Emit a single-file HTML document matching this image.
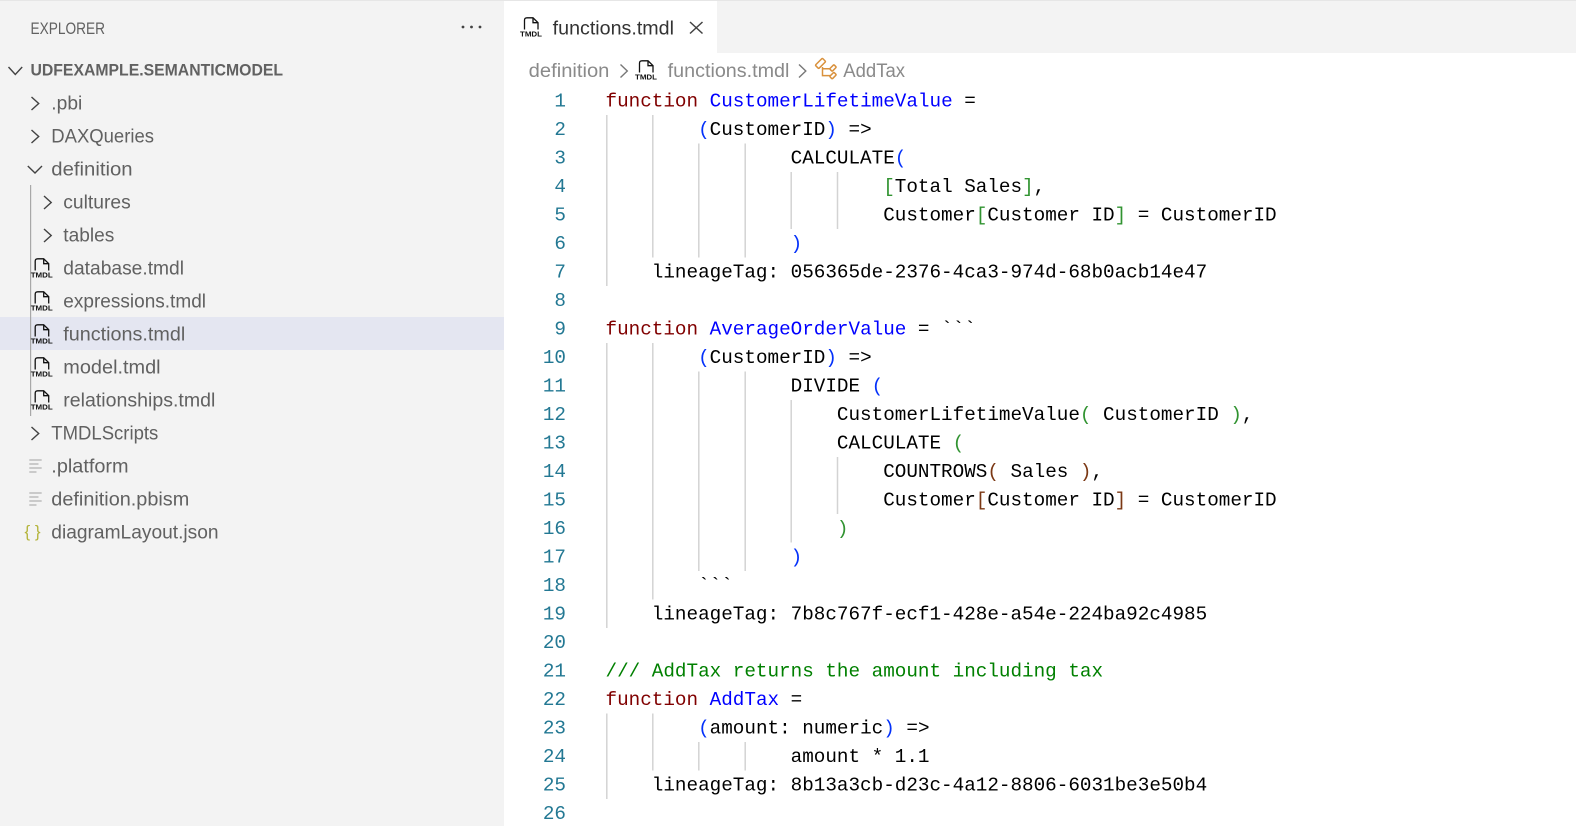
<!DOCTYPE html>
<html><head><meta charset="utf-8"><title>functions.tmdl</title>
<style>
html,body{margin:0;padding:0;width:1576px;height:826px;overflow:hidden;background:#fff}
svg{display:block}
.s{font-family:"Liberation Sans",sans-serif;font-size:19px;fill:#616161}
.b{font-family:"Liberation Sans",sans-serif;font-size:19px;fill:#8a8a8a}
.c{font-family:"Liberation Mono",monospace;font-size:19.29px;fill:#000;white-space:pre}
.n{font-family:"Liberation Mono",monospace;font-size:19.29px;fill:#237893;text-anchor:end}
.t{font-family:"Liberation Sans",sans-serif;font-size:7.6px;font-weight:bold;fill:#111}
.k{fill:#800000}.f{fill:#0000ff}.p1{fill:#0431fa}.p2{fill:#319331}.p3{fill:#7b3814}.g{fill:#008000}
.ch{fill:none;stroke:#424242;stroke-width:1.4}
.pg{fill:none;stroke:#111;stroke-width:1.3}
.gd{stroke:#d3d3d3;stroke-width:1.5}
.ln{stroke:#bdbdbd;stroke-width:1.4}
</style></head><body>
<svg width="1576" height="826" viewBox="0 0 1576 826" xmlns="http://www.w3.org/2000/svg">
<rect width="1576" height="826" fill="#fff"/>
<rect width="504" height="826" fill="#f3f3f3"/>
<rect x="504" width="1072" height="53" fill="#f3f3f3"/>
<rect width="1576" height="1" fill="#e6e6e6"/>
<rect x="504" y="1" width="213" height="52" fill="#fff"/>
<rect y="317" width="504" height="33" fill="#e4e6f1"/>

<!-- sidebar header -->
<text x="30.5" y="34" class="s" style="font-size:17px" textLength="74.5" lengthAdjust="spacingAndGlyphs">EXPLORER</text>
<circle cx="463" cy="27" r="1.4" fill="#424242"/><circle cx="471.5" cy="27" r="1.4" fill="#424242"/><circle cx="480" cy="27" r="1.4" fill="#424242"/>

<!-- tree guide -->
<rect x="30" y="185" width="1.2" height="231" fill="#a8a8a8"/>

<!-- chevrons -->
<path class="ch" d="M8.5 67 L15.3 74.5 L22.2 67"/>
<path class="ch" d="M31.5 97 L38.7 103.5 L31.5 110"/>
<path class="ch" d="M31.5 130 L38.7 136.5 L31.5 143"/>
<path class="ch" d="M27.8 166 L35 173 L42 166"/>
<path class="ch" d="M44 196 L51.2 202.5 L44 209"/>
<path class="ch" d="M44 229 L51.2 235.5 L44 242"/>
<path class="ch" d="M31.5 427 L38.7 433.5 L31.5 440"/>

<!-- tree labels -->
<text x="30.5" y="75.7" class="s" style="font-size:17px;font-weight:bold" textLength="252.5" lengthAdjust="spacingAndGlyphs">UDFEXAMPLE.SEMANTICMODEL</text>
<text x="51.3" y="109.5" class="s" textLength="31" lengthAdjust="spacingAndGlyphs">.pbi</text>
<text x="51.3" y="142.5" class="s" textLength="102.7" lengthAdjust="spacingAndGlyphs">DAXQueries</text>
<text x="51.3" y="175.5" class="s" textLength="81.3" lengthAdjust="spacingAndGlyphs">definition</text>
<text x="63.3" y="208.5" class="s" textLength="67.4" lengthAdjust="spacingAndGlyphs">cultures</text>
<text x="63.3" y="241.5" class="s" textLength="51" lengthAdjust="spacingAndGlyphs">tables</text>
<text x="63.3" y="274.5" class="s" textLength="120.7" lengthAdjust="spacingAndGlyphs">database.tmdl</text>
<text x="63.3" y="307.5" class="s" textLength="142.7" lengthAdjust="spacingAndGlyphs">expressions.tmdl</text>
<text x="63.3" y="340.5" class="s" textLength="122" lengthAdjust="spacingAndGlyphs">functions.tmdl</text>
<text x="63.3" y="373.5" class="s" textLength="97.3" lengthAdjust="spacingAndGlyphs">model.tmdl</text>
<text x="63.3" y="406.5" class="s" textLength="152" lengthAdjust="spacingAndGlyphs">relationships.tmdl</text>
<text x="51.3" y="439.5" class="s" textLength="107" lengthAdjust="spacingAndGlyphs">TMDLScripts</text>
<text x="51.3" y="472.5" class="s" textLength="77.3" lengthAdjust="spacingAndGlyphs">.platform</text>
<text x="51.3" y="505.5" class="s" textLength="138" lengthAdjust="spacingAndGlyphs">definition.pbism</text>
<text x="51.3" y="538.5" class="s" textLength="167.3" lengthAdjust="spacingAndGlyphs">diagramLayout.json</text>

<!-- TMDL icons in tree -->
<g transform="translate(30.7,258)"><path class="pg" d="M4.5 12.5V3.2Q4.5 .8 7 .8H13L18 5.7V12.5M13 1V5.7H18"/><text x="0" y="19.5" class="t" textLength="22" lengthAdjust="spacingAndGlyphs">TMDL</text></g>
<g transform="translate(30.7,291)"><path class="pg" d="M4.5 12.5V3.2Q4.5 .8 7 .8H13L18 5.7V12.5M13 1V5.7H18"/><text x="0" y="19.5" class="t" textLength="22" lengthAdjust="spacingAndGlyphs">TMDL</text></g>
<g transform="translate(30.7,324)"><path class="pg" d="M4.5 12.5V3.2Q4.5 .8 7 .8H13L18 5.7V12.5M13 1V5.7H18"/><text x="0" y="19.5" class="t" textLength="22" lengthAdjust="spacingAndGlyphs">TMDL</text></g>
<g transform="translate(30.7,357)"><path class="pg" d="M4.5 12.5V3.2Q4.5 .8 7 .8H13L18 5.7V12.5M13 1V5.7H18"/><text x="0" y="19.5" class="t" textLength="22" lengthAdjust="spacingAndGlyphs">TMDL</text></g>
<g transform="translate(30.7,390)"><path class="pg" d="M4.5 12.5V3.2Q4.5 .8 7 .8H13L18 5.7V12.5M13 1V5.7H18"/><text x="0" y="19.5" class="t" textLength="22" lengthAdjust="spacingAndGlyphs">TMDL</text></g>

<!-- plain file icons -->
<path class="ln" d="M29.3 460H41.7M29.3 464H38.5M29.3 468H41.7M29.3 472H36.5"/>
<path class="ln" d="M29.3 493H41.7M29.3 497H38.5M29.3 501H41.7M29.3 505H36.5"/>
<text x="24.5" y="537" style="font-family:'Liberation Sans',sans-serif;font-size:17px;fill:#b4b43c;white-space:pre" textLength="16" lengthAdjust="spacing">{ }</text>

<!-- tab -->
<g transform="translate(520,17)"><path class="pg" d="M4.5 12.5V3.2Q4.5 .8 7 .8H13L18 5.7V12.5M13 1V5.7H18"/><text x="0" y="19.5" class="t" textLength="22" lengthAdjust="spacingAndGlyphs">TMDL</text></g>
<text x="552.7" y="34.7" class="s" style="fill:#333" textLength="121.3" lengthAdjust="spacingAndGlyphs">functions.tmdl</text>
<path d="M690 22L702.5 33.5M702.5 22L690 33.5" fill="none" stroke="#424242" stroke-width="1.5"/>

<!-- breadcrumb -->
<text x="528.7" y="76.8" class="b" textLength="80.7" lengthAdjust="spacingAndGlyphs">definition</text>
<path d="M620.5 64.5L627.3 71L620.5 77.5" fill="none" stroke="#777" stroke-width="1.4"/>
<g transform="translate(635,60)"><path class="pg" d="M4.5 12.5V3.2Q4.5 .8 7 .8H13L18 5.7V12.5M13 1V5.7H18"/><text x="0" y="19.5" class="t" textLength="22" lengthAdjust="spacingAndGlyphs">TMDL</text></g>
<text x="667.7" y="76.8" class="b" textLength="121.7" lengthAdjust="spacingAndGlyphs">functions.tmdl</text>
<path d="M799 64.5L805.8 71L799 77.5" fill="none" stroke="#777" stroke-width="1.4"/>
<g fill="none" stroke="#d9913c" stroke-width="1.5">
<rect x="815.5" y="61" width="10" height="4.8" rx="1" transform="rotate(-45 820.5 63.4)"/>
<rect x="830" y="66.2" width="6" height="3.6" rx="1" transform="rotate(-45 833 68)"/>
<rect x="830" y="73.8" width="6" height="3.6" rx="1" transform="rotate(-45 833 75.6)"/>
<path d="M822.5 67V75.6H830.5M822.5 68.7H830.5"/>
</g>
<text x="843.3" y="76.8" class="b" textLength="61.7" lengthAdjust="spacingAndGlyphs">AddTax</text>

<!-- indent guides -->
<path class="gd" d="M606.8 115V286M652.8 115V257.5M698.8 143.5V257.5M745.2 143.5V257.5M791.2 172V229M837.5 172V229"/>
<path class="gd" d="M606.8 343V628M652.8 343V599.5M698.8 371.5V571M745.2 371.5V571M791.2 400V542.5M837.5 457V514"/>
<path class="gd" d="M606.8 713.5V799M652.8 713.5V770.5M698.8 742V770.5M745.2 742V770.5"/>

<!-- line numbers -->
<text x="566" y="106.3" class="n">1</text>
<text x="566" y="134.8" class="n">2</text>
<text x="566" y="163.3" class="n">3</text>
<text x="566" y="191.8" class="n">4</text>
<text x="566" y="220.3" class="n">5</text>
<text x="566" y="248.8" class="n">6</text>
<text x="566" y="277.3" class="n">7</text>
<text x="566" y="305.8" class="n">8</text>
<text x="566" y="334.3" class="n">9</text>
<text x="566" y="362.8" class="n">10</text>
<text x="566" y="391.3" class="n">11</text>
<text x="566" y="419.8" class="n">12</text>
<text x="566" y="448.3" class="n">13</text>
<text x="566" y="476.8" class="n">14</text>
<text x="566" y="505.3" class="n">15</text>
<text x="566" y="533.8" class="n">16</text>
<text x="566" y="562.3" class="n">17</text>
<text x="566" y="590.8" class="n">18</text>
<text x="566" y="619.3" class="n">19</text>
<text x="566" y="647.8" class="n">20</text>
<text x="566" y="676.3" class="n">21</text>
<text x="566" y="704.8" class="n">22</text>
<text x="566" y="733.3" class="n">23</text>
<text x="566" y="761.8" class="n">24</text>
<text x="566" y="790.3" class="n">25</text>
<text x="566" y="818.8" class="n">26</text>

<!-- code -->
<text x="605.5" y="106.3" class="c"><tspan class="k">function</tspan> <tspan class="f">CustomerLifetimeValue</tspan> =</text>
<text x="605.5" y="134.8" class="c">        <tspan class="p1">(</tspan>CustomerID<tspan class="p1">)</tspan> =&gt;</text>
<text x="605.5" y="163.3" class="c">                CALCULATE<tspan class="p1">(</tspan></text>
<text x="605.5" y="191.8" class="c">                        <tspan class="p2">[</tspan>Total Sales<tspan class="p2">]</tspan>,</text>
<text x="605.5" y="220.3" class="c">                        Customer<tspan class="p2">[</tspan>Customer ID<tspan class="p2">]</tspan> = CustomerID</text>
<text x="605.5" y="248.8" class="c">                <tspan class="p1">)</tspan></text>
<text x="605.5" y="277.3" class="c">    lineageTag: 056365de-2376-4ca3-974d-68b0acb14e47</text>
<text x="605.5" y="334.3" class="c"><tspan class="k">function</tspan> <tspan class="f">AverageOrderValue</tspan> = &#96;&#96;&#96;</text>
<text x="605.5" y="362.8" class="c">        <tspan class="p1">(</tspan>CustomerID<tspan class="p1">)</tspan> =&gt;</text>
<text x="605.5" y="391.3" class="c">                DIVIDE <tspan class="p1">(</tspan></text>
<text x="605.5" y="419.8" class="c">                    CustomerLifetimeValue<tspan class="p2">(</tspan> CustomerID <tspan class="p2">)</tspan>,</text>
<text x="605.5" y="448.3" class="c">                    CALCULATE <tspan class="p2">(</tspan></text>
<text x="605.5" y="476.8" class="c">                        COUNTROWS<tspan class="p3">(</tspan> Sales <tspan class="p3">)</tspan>,</text>
<text x="605.5" y="505.3" class="c">                        Customer<tspan class="p3">[</tspan>Customer ID<tspan class="p3">]</tspan> = CustomerID</text>
<text x="605.5" y="533.8" class="c">                    <tspan class="p2">)</tspan></text>
<text x="605.5" y="562.3" class="c">                <tspan class="p1">)</tspan></text>
<text x="605.5" y="590.8" class="c">        &#96;&#96;&#96;</text>
<text x="605.5" y="619.3" class="c">    lineageTag: 7b8c767f-ecf1-428e-a54e-224ba92c4985</text>
<text x="605.5" y="676.3" class="c g">/// AddTax returns the amount including tax</text>
<text x="605.5" y="704.8" class="c"><tspan class="k">function</tspan> <tspan class="f">AddTax</tspan> =</text>
<text x="605.5" y="733.3" class="c">        <tspan class="p1">(</tspan>amount: numeric<tspan class="p1">)</tspan> =&gt;</text>
<text x="605.5" y="761.8" class="c">                amount * 1.1</text>
<text x="605.5" y="790.3" class="c">    lineageTag: 8b13a3cb-d23c-4a12-8806-6031be3e50b4</text>
</svg>
</body></html>
